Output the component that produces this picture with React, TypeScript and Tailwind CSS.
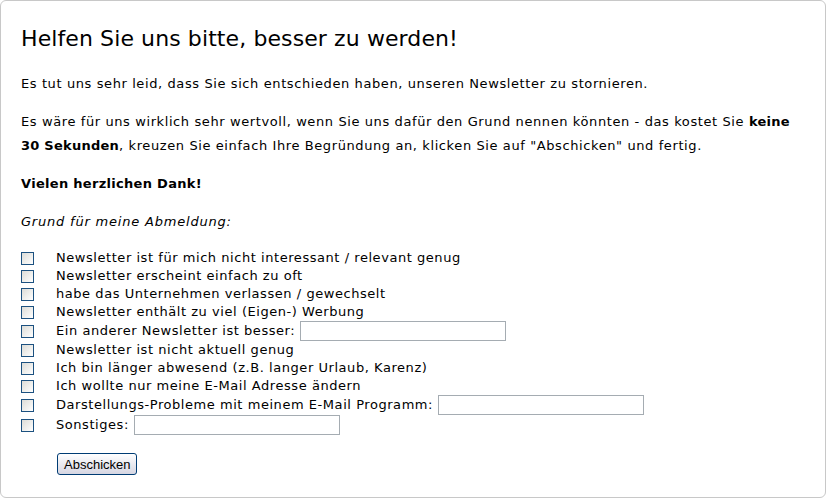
import React from 'react';

type Reason = { label: string; input?: boolean };

const reasons: Reason[] = [
    { label: 'Newsletter ist für mich nicht interessant / relevant genug' },
    { label: 'Newsletter erscheint einfach zu oft' },
    { label: 'habe das Unternehmen verlassen / gewechselt' },
    { label: 'Newsletter enthält zu viel (Eigen-) Werbung' },
    { label: 'Ein anderer Newsletter ist besser:', input: true },
    { label: 'Newsletter ist nicht aktuell genug' },
    { label: 'Ich bin länger abwesend (z.B. langer Urlaub, Karenz)' },
    { label: 'Ich wollte nur meine E-Mail Adresse ändern' },
    { label: 'Darstellungs-Probleme mit meinem E-Mail Programm:', input: true },
    { label: 'Sonstiges:', input: true },
];

const CheckBox: React.FC = () => (
    <span className="block w-[13px] h-[13px] shrink-0 border border-[#1c5180] bg-linear-to-br from-[#dcdcd7] to-white" />
);

export default function App() {
    return (
        <div className="w-[827px] h-[501px] bg-white font-['DejaVu_Sans',Verdana,sans-serif] text-black">
            <div className="w-[826px] h-[498px] border border-[#c8c8c8] rounded-[6px] pl-[20px] pt-[24px]">
                <h1 className="text-[22px] leading-[28px] font-normal tracking-[0.1px]">
                    Helfen Sie uns bitte, besser zu werden!
                </h1>

                <div className="mt-[19px] text-[13px] leading-[24px] tracking-[0.6px] flex flex-col gap-[14px]">
                    <p>Es tut uns sehr leid, dass Sie sich entschieden haben, unseren Newsletter zu stornieren.</p>
                    <p className="pr-[20px]">
                        Es wäre für uns wirklich sehr wertvoll, wenn Sie uns dafür den Grund nennen könnten - das kostet Sie{' '}
                        <b className="tracking-[0.25px]">keine</b>{' '}
                        <b className="tracking-[0.25px]">30 Sekunden</b>, kreuzen Sie einfach Ihre Begründung an, klicken Sie auf "Abschicken" und fertig.
                    </p>
                    <p className="font-bold tracking-[0.3px]">Vielen herzlichen Dank!</p>
                    <p className="italic tracking-[0.8px]">Grund für meine Abmeldung:</p>
                </div>

                <ul className="mt-[15px] text-[13px] tracking-[0.55px]">
                    {reasons.map((r) => (
                        <li
                            key={r.label}
                            className={`flex items-center ${r.input ? 'h-[20px]' : 'h-[18px]'}`}
                        >
                            <span className="w-[35px] shrink-0">
                                <CheckBox />
                            </span>
                            <span className="whitespace-nowrap">{r.label}</span>
                            {r.input && (
                                <input
                                    type="text"
                                    className="ml-[5px] w-[206px] h-[20px] border border-[#a5acb2] bg-white outline-none"
                                />
                            )}
                        </li>
                    ))}
                </ul>

                <button
                    className="mt-[18px] ml-[36px] h-[22px] px-[6px] rounded-[3px] border border-[#003c74] bg-linear-to-b from-white to-[#d6d6e2] font-['Liberation_Sans',Arial,sans-serif] text-[13px] leading-none"
                >
                    Abschicken
                </button>
            </div>
        </div>
    );
}
